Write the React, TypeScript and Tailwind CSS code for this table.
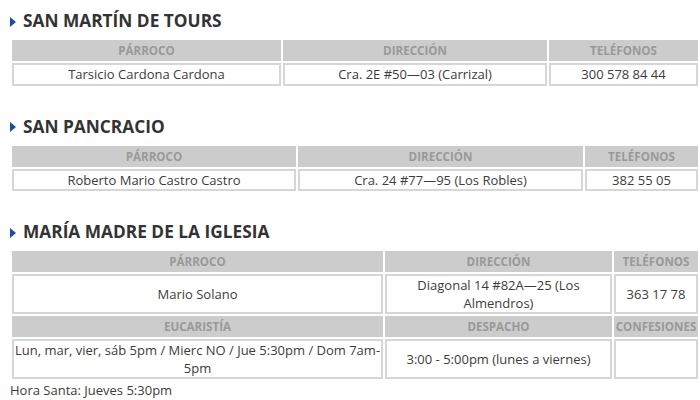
const font = { fontFamily: '"Open Sans", "Liberation Sans", sans-serif' };

type Cell = { text: string; w: number };

const Title = ({ children, top }: { children: string; top: string }) => {
  return (
    <div className={`flex items-center pl-[10px] ${top} h-[24px]`}>
      <span className="w-0 h-0 border-l-[6px] border-l-[#1d4e9e] border-y-[5px] border-y-transparent mt-[1px]"></span>
      <h2 className="ml-[7px] text-[17.3px] leading-[24px] font-bold text-[#333]">
        {children}
      </h2>
    </div>
  );
};

const HeadRow = ({ cells }: { cells: Cell[] }) => {
  return (
    <tr>
      {cells.map((c) => (
        <th
          key={c.text}
          style={{ width: c.w }}
          className="bg-[#cccccc] text-[#999] text-[11.6px] font-bold uppercase h-[21px] leading-[21px] p-0 text-center whitespace-nowrap overflow-hidden"
        >
          {c.text}
        </th>
      ))}
    </tr>
  );
};

const BodyRow = ({ cells }: { cells: Cell[] }) => {
  return (
    <tr>
      {cells.map((c, i) => (
        <td
          key={i}
          style={{ width: c.w }}
          className="border-2 border-[#d6d6d6] bg-white text-[#3c3c3c] text-[13px] leading-[17.5px] pt-[1px] px-0 pb-0 text-center align-middle"
        >
          {c.text}
        </td>
      ))}
    </tr>
  );
};

const Table = ({ children }: { children: React.ReactNode }) => {
  return (
    <table className="ml-[10px] w-[690px] border-separate border-spacing-[2px] table-fixed mt-[5px]">
      <tbody>{children}</tbody>
    </table>
  );
};

export default function App() {
  return (
    <div className="w-[700px] h-[400px] bg-white overflow-hidden" style={font}>
      <Title top="mt-[9px]">SAN MARTÍN DE TOURS</Title>
      <Table>
        <HeadRow
          cells={[
            { text: "Párroco", w: 269 },
            { text: "Dirección", w: 264 },
            { text: "Teléfonos", w: 149 },
          ]}
        />
        <BodyRow
          cells={[
            { text: "Tarsicio Cardona Cardona", w: 269 },
            { text: "Cra. 2E #50—03 (Carrizal)", w: 264 },
            { text: "300 578 84 44", w: 149 },
          ]}
        />
      </Table>

      <Title top="mt-[27px]">SAN PANCRACIO</Title>
      <Table>
        <HeadRow
          cells={[
            { text: "Párroco", w: 284 },
            { text: "Dirección", w: 285 },
            { text: "Teléfonos", w: 113 },
          ]}
        />
        <BodyRow
          cells={[
            { text: "Roberto Mario Castro Castro", w: 284 },
            { text: "Cra. 24 #77—95 (Los Robles)", w: 285 },
            { text: "382 55 05", w: 113 },
          ]}
        />
      </Table>

      <Title top="mt-[27px]">MARÍA MADRE DE LA IGLESIA</Title>
      <Table>
        <HeadRow
          cells={[
            { text: "Párroco", w: 371 },
            { text: "Dirección", w: 227 },
            { text: "Teléfonos", w: 84 },
          ]}
        />
        <BodyRow
          cells={[
            { text: "Mario Solano", w: 371 },
            { text: "Diagonal 14 #82A—25 (Los Almendros)", w: 227 },
            { text: "363 17 78", w: 84 },
          ]}
        />
        <HeadRow
          cells={[
            { text: "Eucaristía", w: 371 },
            { text: "Despacho", w: 227 },
            { text: "Confesiones", w: 84 },
          ]}
        />
        <BodyRow
          cells={[
            { text: "Lun, mar, vier, sáb 5pm / Mierc NO / Jue 5:30pm / Dom 7am-5pm", w: 371 },
            { text: "3:00 - 5:00pm (lunes a viernes)", w: 227 },
            { text: "", w: 84 },
          ]}
        />
      </Table>
      <p className="pl-[10px] text-[13px] leading-[18px] text-[#3c3c3c]">Hora Santa: Jueves 5:30pm</p>
    </div>
  );
}
